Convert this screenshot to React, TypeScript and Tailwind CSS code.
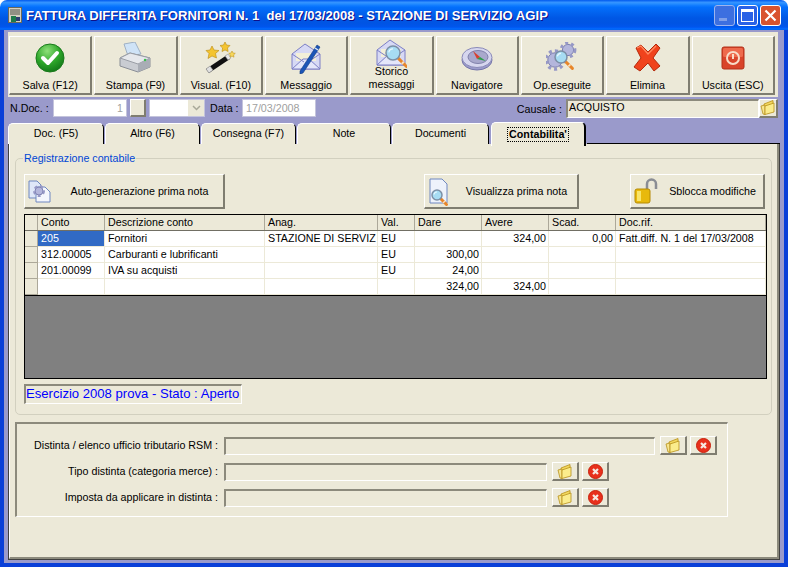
import type { ReactNode } from "react";

const raised = "border-t border-l border-white border-r-2 border-b-2 border-r-[#7f7d70] border-b-[#7f7d70] bg-[#ece9d8]";
const sunken = "border-t-2 border-l-2 border-t-[#8c8a7c] border-l-[#8c8a7c] border-r border-b border-r-white border-b-white bg-[#ece9d8]";

function CheckIcon() {
  return (
    <svg width="32" height="32" viewBox="0 0 32 32">
      <defs>
        <radialGradient id="chk" cx="40%" cy="25%" r="85%">
          <stop offset="0" stopColor="#8fe07a" />
          <stop offset="0.5" stopColor="#2fa82b" />
          <stop offset="1" stopColor="#0c6d14" />
        </radialGradient>
      </defs>
      <circle cx="16" cy="16" r="14" fill="url(#chk)" stroke="#1a7a1c" />
      <path d="M9 16l5 5 9-10" fill="none" stroke="#fff" strokeWidth="4" strokeLinecap="round" strokeLinejoin="round" />
    </svg>
  );
}

function PrinterIcon() {
  return (
    <svg width="34" height="32" viewBox="0 0 34 32">
      <path d="M6 2l11-2 6 12-13 2z" fill="#cfe3f7" stroke="#9fb0c4" />
      <path d="M2 16l10-5 20 5v9l-12 5-18-6z" fill="#c9ccd2" stroke="#8a8e96" />
      <path d="M2 16l18 6 12-6-20-5z" fill="#e6e8ec" stroke="#9a9ea6" />
      <path d="M20 22v8l12-5v-9z" fill="#a9adb5" />
      <circle cx="27" cy="18" r="1.2" fill="#37c24a" />
    </svg>
  );
}

function WandIcon() {
  return (
    <svg width="32" height="32" viewBox="0 0 32 32">
      <path d="M1 27L22 13l3 4L4 31z" fill="#111" />
      <path d="M1 27l4-3 3 4-4 3z" fill="#e0e0e0" stroke="#888" strokeWidth="0.5" />
      <path d="M20 14l3-2 3 4-3 2z" fill="#e8e8e8" stroke="#888" strokeWidth="0.5" />
      <path d="M7 4l2 4 5 .5-3.500 3 1 4.500L7 14l-4 2.500 1-5L1 8.500 5 8z" fill="#f4c430" stroke="#b88a10" strokeWidth="0.6" />
      <path d="M20 0l1.500 3 3.500.5-2.500 2.500.6 3.500L20 8l-3 1.500.6-3.500L15 3.500 18.500 3z" fill="#f4c430" stroke="#b88a10" strokeWidth="0.6" />
      <path d="M27 9l1 2 2.300.3-1.700 1.600.4 2.300-2-1.100-2 1.100.4-2.300-1.700-1.600 2.300-.3z" fill="#f7d75a" stroke="#b88a10" strokeWidth="0.5" />
    </svg>
  );
}

function EnvelopeBase() {
  return (
    <>
      <path d="M2 12L15 2l15 10v15H2z" fill="#d7d9f4" stroke="#7c7fc6" />
      <path d="M6 11h20v8H6z" fill="#f3efd8" />
      <path d="M2 27l11-10h6l11 10z" fill="#e4e6fa" stroke="#7c7fc6" />
      <path d="M2 12l12 8M30 12l-12 8" stroke="#7c7fc6" fill="none" />
    </>
  );
}

function MessageIcon() {
  return (
    <svg width="32" height="32" viewBox="0 0 32 32">
      <EnvelopeBase />
      <path d="M10 29L27 3l3 2-17 26-3 1z" fill="#1c55b8" stroke="#123a80" strokeWidth="0.6" />
      <path d="M25 6l3 2" stroke="#d8e4f8" strokeWidth="1.5" />
    </svg>
  );
}

function Lens({ cx, cy, r }: { cx: number; cy: number; r: number }) {
  return (
    <>
      <path d={`M${cx + r * 0.7} ${cy + r * 0.7}L${cx + r * 1.9} ${cy + r * 1.9}`} stroke="#e8862a" strokeWidth="3" strokeLinecap="round" />
      <path d={`M${cx + r * 1.3} ${cy + r * 1.3}L${cx + r * 1.5} ${cy + r * 1.5}`} stroke="#f8e0c0" strokeWidth="3" />
      <circle cx={cx} cy={cy} r={r} fill="#a7dcf3" stroke="#7c8fa6" strokeWidth="1.500" />
      <path d={`M${cx - r * 0.6} ${cy - r * 0.1}A${r * 0.6} ${r * 0.6} 0 0 1 ${cx} ${cy - r * 0.6}`} stroke="#e8f8ff" strokeWidth="1.200" fill="none" />
    </>
  );
}

function HistoryIcon() {
  return (
    <svg width="32" height="32" viewBox="0 0 32 32">
      <EnvelopeBase />
      <Lens cx={18} cy={15} r={7} />
    </svg>
  );
}

function CompassIcon() {
  return (
    <svg width="32" height="32" viewBox="0 0 32 32">
      <ellipse cx="16" cy="18" rx="15" ry="10" fill="#9c9ccb" stroke="#7474a8" />
      <ellipse cx="16" cy="15.500" rx="15" ry="10" fill="#d6d6ee" stroke="#8a8ab8" />
      <ellipse cx="17" cy="15" rx="10" ry="6.500" fill="#a8a8cc" stroke="#8080aa" />
      <path d="M12 9l7 6-3 2z" fill="#d8402c" />
      <path d="M19 15l6 4-9-2z" fill="#2c9c48" />
    </svg>
  );
}

function Gear({ cx, cy, r }: { cx: number; cy: number; r: number }) {
  return (
    <>
      <circle cx={cx} cy={cy} r={r * 0.8} fill="#b4b6dc" stroke="#7d80b0" />
      <circle cx={cx} cy={cy} r={r} fill="none" stroke="#9698c6" strokeWidth={r * 0.4} strokeDasharray="3 3" />
    </>
  );
}

function GearsIcon() {
  return (
    <svg width="32" height="32" viewBox="0 0 32 32">
      <Gear cx={22} cy={8} r={7} />
      <Gear cx={9} cy={18} r={9} />
      <Lens cx={15} cy={15} r={6} />
    </svg>
  );
}

function CrossIcon() {
  return (
    <svg width="30" height="30" viewBox="0 0 30 30">
      <path d="M4 5l5-3 7 7 8-8 4 4-7 10 7 8-6 5-6-8-8 8-6-4 7-9z" fill="#f0431c" stroke="#b52a0c" strokeLinejoin="round" />
      <path d="M5 5l4-2 7 8 8-8" fill="none" stroke="#ff8a60" strokeWidth="1.200" />
    </svg>
  );
}

function PowerIcon() {
  return (
    <svg width="24" height="24" viewBox="0 0 24 24">
      <rect x="1" y="1" width="22" height="22" rx="2" fill="#d9442a" stroke="#b23018" />
      <rect x="2" y="2" width="20" height="9" rx="1.500" fill="#ee6a4c" />
      <circle cx="12" cy="12" r="6" fill="none" stroke="#f8dcc8" strokeWidth="2" />
      <path d="M12 8v5" stroke="#f8dcc8" strokeWidth="2" />
    </svg>
  );
}

function DocGearIcon() {
  return (
    <svg width="24" height="24" viewBox="0 0 24 24">
      <path d="M1 2h8l4 4v13H1z" fill="#dfe7f8" stroke="#6f87c0" />
      <path d="M8 8h9l5 5v10H8z" fill="#f4f6fc" stroke="#6f87c0" />
      <Gear cx={11} cy={12} r={5} />
    </svg>
  );
}

function DocLensIcon() {
  return (
    <svg width="24" height="24" viewBox="0 0 24 24" className="overflow-visible">
      <path d="M2 0h12l5 5v19H2z" fill="#eef2fb" stroke="#6f87c0" />
      <Lens cx={9} cy={16} r={5} />
    </svg>
  );
}

function LockIcon() {
  return (
    <svg width="24" height="26" viewBox="0 0 24 26">
      <path d="M13 13V6a4.500 4.500 0 0 1 9 0v5" fill="none" stroke="#8a8d94" strokeWidth="2.500" />
      <rect x="1" y="11" width="15" height="14" rx="2" fill="#e8b90c" stroke="#b58a04" />
      <rect x="3" y="13" width="4" height="10" fill="#f9e46a" />
    </svg>
  );
}

function FolderIcon() {
  return (
    <svg width="16" height="15" viewBox="0 0 16 15">
      <path d="M4 4l9-3.500V11l-9 3z" fill="#f2d75e" stroke="#b8901a" strokeWidth="0.800" />
      <path d="M1 6l4-1v9.500L3 14z" fill="#f7e690" stroke="#b8901a" strokeWidth="0.800" />
      <path d="M5 6l9-3v9l-9 2.500z" fill="#fbec8c" stroke="#b8901a" strokeWidth="0.800" />
    </svg>
  );
}

function RemoveIcon() {
  return (
    <svg width="15" height="15" viewBox="0 0 15 15">
      <circle cx="7.500" cy="7.500" r="7" fill="#e8301c" stroke="#c8200c" />
      <path d="M5 5l5 5M10 5l-5 5" stroke="#f6e8e0" strokeWidth="2.200" />
    </svg>
  );
}

function AppIcon() {
  return (
    <svg width="14" height="16" viewBox="0 0 14 16">
      <rect x="0.500" y="0.500" width="13" height="15" fill="#d4d0c0" stroke="#6a6a5c" />
      <path d="M2 3h10M2 5h10M2 7h10" stroke="#505048" />
      <rect x="3" y="9" width="5" height="6" fill="#1f7a4a" />
      <rect x="8" y="10" width="4" height="4" fill="#2c3e70" />
    </svg>
  );
}

const tools: { label: string; icon: ReactNode }[] = [
  { label: "Salva (F12)", icon: <CheckIcon /> },
  { label: "Stampa (F9)", icon: <PrinterIcon /> },
  { label: "Visual. (F10)", icon: <WandIcon /> },
  { label: "Messaggio", icon: <MessageIcon /> },
  { label: "Storico messaggi", icon: <HistoryIcon /> },
  { label: "Navigatore", icon: <CompassIcon /> },
  { label: "Op.eseguite", icon: <GearsIcon /> },
  { label: "Elimina", icon: <CrossIcon /> },
  { label: "Uscita (ESC)", icon: <PowerIcon /> },
];

const tabs = ["Doc. (F5)", "Altro (F6)", "Consegna (F7)", "Note", "Documenti"];
const tabWidths = ["w-[96px]", "w-[95px]", "w-[95px]", "w-[94px]", "w-[97px]"];

const columns = ["Conto", "Descrizione conto", "Anag.", "Val.", "Dare", "Avere", "Scad.", "Doc.rif."];
const rows = [
  ["205", "Fornitori", "STAZIONE DI SERVIZ", "EU", "", "324,00", "0,00", "Fatt.diff. N. 1 del 17/03/2008"],
  ["312.00005", "Carburanti e lubrificanti", "", "EU", "300,00", "", "", ""],
  ["201.00099", "IVA su acquisti", "", "EU", "24,00", "", "", ""],
  ["", "", "", "", "324,00", "324,00", "", ""],
];
const gridCols = "grid grid-cols-[13px_67px_160px_113px_37px_67px_67px_67px_1fr]";

function ActionButton({ icon, label, className }: { icon: ReactNode; label: string; className: string }) {
  return (
    <div className={`${raised} h-[35px] flex items-center pl-[3px] ${className}`}>
      {icon}
      <span className="flex-1 text-center pl-[4px]">{label}</span>
    </div>
  );
}

function SmallButtons() {
  return (
    <>
      <div className={`${raised} w-[27px] h-[19px] flex items-center justify-center ml-[5px]`}><FolderIcon /></div>
      <div className={`${raised} w-[27px] h-[19px] flex items-center justify-center ml-[3px]`}><RemoveIcon /></div>
    </>
  );
}

function TaxRow({ label, fieldWidth }: { label: string; fieldWidth: string }) {
  return (
    <div className="flex items-center h-[19px]">
      <span className="w-[201px] mr-[1px] text-right whitespace-nowrap">{label}</span>
      <div className={`${sunken} h-[18px] ml-[5px] ${fieldWidth}`} />
      <SmallButtons />
    </div>
  );
}

export default function App() {
  return (
    <div className="w-[788px] h-[567px] flex flex-col bg-white overflow-hidden text-[10.7px] leading-[13px] text-black font-['Liberation_Sans',Arial,sans-serif]">
      {/* Title bar */}
      <div className="h-[30px] shrink-0 flex items-center pl-[8px] pr-[7px] rounded-t-[7px] bg-[linear-gradient(180deg,#0058ee_0%,#3593ff_8%,#288eff_12%,#127dff_18%,#036ffc_24%,#0262ee_44%,#0057e5_60%,#0054e3_76%,#0055eb_88%,#005bf5_92%,#026afe_96%,#0062ef_100%)]">
        <AppIcon />
        <span className="ml-[4px] text-white font-bold text-[13.1px] whitespace-pre [text-shadow:1px_1px_#0f1089]">
          FATTURA DIFFERITA FORNITORI N. 1  del 17/03/2008 - STAZIONE DI SERVIZIO AGIP
        </span>
        <div className="ml-auto flex gap-[2px]">
          <div className="w-[21px] h-[21px] rounded-[3px] border border-[#9db4ee] bg-[#3c6fe0] flex items-end pl-[4px] pb-[4px]">
            <div className="w-[8px] h-[3px] bg-[#7f9fe8]" />
          </div>
          <div className="w-[21px] h-[21px] rounded-[3px] border border-white bg-[#2a62e6] flex items-center justify-center">
            <div className="w-[13px] h-[13px] border border-white border-t-[3px]" />
          </div>
          <div className="w-[21px] h-[21px] rounded-[3px] border border-white bg-[#d9532f] flex items-center justify-center">
            <svg width="13" height="13" viewBox="0 0 13 13"><path d="M1.500 1.500l10 10M11.500 1.500l-10 10" stroke="#fff" strokeWidth="2.200" /></svg>
          </div>
        </div>
      </div>

      {/* Window frame */}
      <div className="flex-1 min-h-0 flex flex-col border-x-4 border-b-4 border-[#0a3fd8] bg-[#9a9acb] px-[4px] pb-[3px]">
        {/* Toolbar */}
        <div className="mt-[2px] mr-[2px] h-[65px] shrink-0 bg-[#ece9d8] pt-[4px] pl-[1px] pr-[3px] flex gap-[2px]">
          {tools.map((t) => {
            const twoLines = t.label === "Storico messaggi";
            return (
              <div key={t.label} className={`${raised} flex-1 h-[59px] flex flex-col items-center ${twoLines ? "pt-[1px]" : "pt-[5px]"}`}>
                <div className="h-[32px] flex items-center justify-center">{t.icon}</div>
                {twoLines ? (
                  <span className="relative -mt-[5px] text-center w-[60px]">{t.label}</span>
                ) : (
                  <span className="mt-[5px] whitespace-nowrap">{t.label}</span>
                )}
              </div>
            );
          })}
        </div>

        {/* Document row */}
        <div className="h-[25px] shrink-0 flex items-center pb-[3px] pl-[2px] pr-[2px]">
          <span className="w-[43px]">N.Doc. :</span>
          <div className="w-[74px] h-[18px] bg-white border border-[#c4c4dc] text-right text-[#a0a0a0] pr-[3px] leading-[16px]">1</div>
          <div className={`${raised} w-[16px] h-[18px] ml-[3px]`} />
          <div className="w-[56px] h-[18px] ml-[3px] bg-white border border-[#c4c4dc] flex justify-end">
            <div className="w-[16px] bg-[#ece9d8] flex items-center justify-center">
              <svg width="9" height="6" viewBox="0 0 9 6"><path d="M1 1l3.500 3.500L8 1" fill="none" stroke="#a8a898" strokeWidth="1.500" /></svg>
            </div>
          </div>
          <span className="ml-[5px] w-[32px]">Data :</span>
          <div className="w-[74px] h-[18px] bg-white border border-[#c4c4dc] text-[#a0a0a0] pl-[3px] leading-[16px]">17/03/2008</div>
          <span className="ml-auto mr-[4px] mt-[3px]">Causale :</span>
          <div className={`${sunken} w-[193px] h-[19px] pl-[1px] leading-[13px]`}>ACQUISTO</div>
          <div className={`${raised} w-[19px] h-[19px] flex items-center justify-center`}><FolderIcon /></div>
        </div>

        {/* Tabs */}
        <div className="h-[22px] shrink-0 flex items-end gap-[1px]">
          {tabs.map((t, i) => (
            <div key={t} className={`${tabWidths[i]} h-[21px] pb-[1px] rounded-t-[5px] bg-[#ece9d8] border-t border-l border-white border-r border-r-black flex items-center justify-center`}>
              {t}
            </div>
          ))}
          <div className="relative z-10 ml-[1px] -mb-[2px] w-[95px] h-[24px] rounded-t-[5px] bg-[#ece9d8] border-t border-l border-white border-r-2 border-r-black flex items-start justify-center pt-[4px]">
            <span className="font-bold border border-dotted border-black px-[1px]">Contabilita'</span>
          </div>
          <div className="flex-1 border-b border-black" />
        </div>

        {/* Main panel */}
        <div className="flex-1 min-h-0 border-l border-b border-r border-[#404040]">
          <div className="h-full bg-[#ece9d8] border-l border-white border-r-2 border-b-2 border-r-[#8c8a7c] border-b-[#8c8a7c] pt-[8px] pl-[5px] pr-[4px]">
            <fieldset className="h-[263px] mr-[1px] border border-[#d2d0bf] rounded-[5px] pl-[8px] pr-[4px]">
              <legend className="-ml-[1px] px-[1px] text-[#0046d5]">Registrazione contabile</legend>
              <div className="mt-[9px] flex">
                <ActionButton icon={<DocGearIcon />} label="Auto-generazione prima nota" className="w-[201px]" />
                <ActionButton icon={<DocLensIcon />} label="Visualizza prima nota" className="w-[155px] ml-[199px]" />
                <ActionButton icon={<LockIcon />} label="Sblocca modifiche" className="w-[135px] ml-[51px]" />
              </div>

              {/* Grid */}
              <div className="mt-[5px] w-[743px] h-[165px] border border-black flex flex-col bg-[#808080]">
                <div className={`${gridCols} h-[16px] bg-[#ece9d8] border-b border-[#716f64]`}>
                  <div className="border-r border-[#aca899]" />
                  {columns.map((c) => (
                    <div key={c} className="border-r border-[#aca899] px-[3px] leading-[15px] overflow-hidden whitespace-nowrap">{c}</div>
                  ))}
                </div>
                {rows.map((row, r) => (
                  <div key={r} className={`${gridCols} h-[16px] bg-white`}>
                    <div className="bg-[#ece9d8] border-r border-b border-[#aca899]" />
                    {row.map((cell, c) => {
                      const numeric = c >= 4 && c <= 6;
                      const selected = r === 0 && c === 0;
                      return (
                        <div
                          key={c}
                          className={`border-r border-b border-[#ece9d8] pl-[3px] pr-[2px] leading-[15px] overflow-hidden whitespace-nowrap ${numeric ? "text-right" : ""} ${selected ? "bg-[#316ac5] text-white" : ""}`}
                        >
                          {cell}
                        </div>
                      );
                    })}
                  </div>
                ))}
                <div className="border-t border-black" />
              </div>

              <div className={`${sunken} mt-[5px] w-[218px] h-[20px] text-[13.1px] leading-[15px] text-[#0000ff] whitespace-nowrap overflow-hidden`}>
                Esercizio 2008 prova - Stato : Aperto
              </div>
            </fieldset>

            {/* Tax list panel */}
            <div className={`${sunken} mt-[7px] w-[713px] h-[95px] pt-[12px] flex flex-col gap-[7px]`}>
              <TaxRow label="Distinta / elenco ufficio tributario RSM :" fieldWidth="w-[431px]" />
              <TaxRow label="Tipo distinta (categoria merce) :" fieldWidth="w-[323px]" />
              <TaxRow label="Imposta da applicare in distinta :" fieldWidth="w-[323px]" />
            </div>
          </div>
        </div>
      </div>
    </div>
  );
}
